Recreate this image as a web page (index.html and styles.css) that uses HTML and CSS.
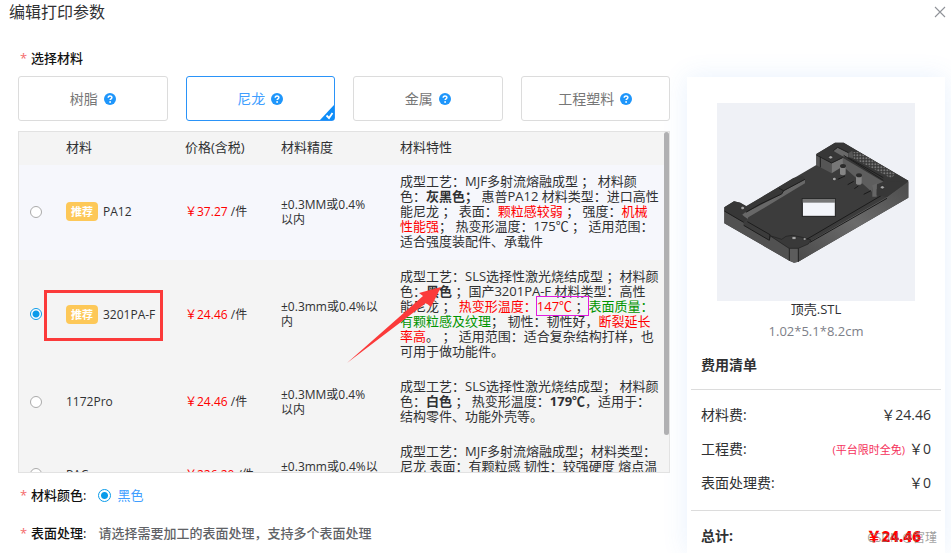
FILE: index.html
```html
<!DOCTYPE html>
<html lang="zh-CN">
<head>
    <meta charset="UTF-8">
    <meta name="viewport" content="width=device-width, initial-scale=1.0">
    <title>编辑打印参数</title>
    <link rel="stylesheet" href="styles.css">
</head>
<body>

<svg class="defs" aria-hidden="true">
    <symbol id="help" viewBox="0 0 12 12">
        <circle cx="6" cy="6" r="6" fill="#1e96fb"/>
        <path d="M4.2 4.7C4.2 2.4 7.9 2.4 7.9 4.6C7.9 5.8 6.1 5.8 6.1 7.1" fill="none" stroke="#fff" stroke-width="1.5"/>
        <circle cx="6.1" cy="9" r="0.9" fill="#fff"/>
    </symbol>
</svg>

<header class="dialog-header">
    <h1>编辑打印参数</h1>
    <button type="button" class="close" aria-label="关闭">
        <svg width="12" height="12" viewBox="0 0 12 12"><path d="M1 1L11 11M11 1L1 11" stroke="#909399" stroke-width="1.1"/></svg>
    </button>
</header>

<div class="dialog-body">
    <form class="params">
        <h2 class="field-title"><span class="star">*</span>选择材料</h2>

        <div class="tabs">
            <button type="button" class="tab">树脂<svg class="help"><use href="#help"/></svg></button>
            <button type="button" class="tab active">尼龙<svg class="help"><use href="#help"/></svg>
                <svg class="corner" viewBox="0 0 14 15"><path d="M14 0V15H0Z" fill="#0d8df8"/><path d="M6.5 10.5L9 13L12.5 8" fill="none" stroke="#fff" stroke-width="1.8"/></svg>
            </button>
            <button type="button" class="tab">金属<svg class="help"><use href="#help"/></svg></button>
            <button type="button" class="tab">工程塑料<svg class="help"><use href="#help"/></svg></button>
        </div>

        <div class="table-wrap">
            <table>
                <thead>
                    <tr>
                        <th class="col-radio"></th>
                        <th class="col-name">材料</th>
                        <th class="col-price">价格(含税)</th>
                        <th class="col-accuracy">材料精度</th>
                        <th>材料特性</th>
                    </tr>
                </thead>
                <tbody>
                    <tr class="hover">
                        <td><input type="radio" name="material" id="m1"></td>
                        <td><label for="m1"><span class="tag">推荐</span>PA12</label></td>
                        <td><span class="price">￥37.27</span> /件</td>
                        <td>±0.3MM或0.4%<br>以内</td>
                        <td class="desc">成型工艺：MJF多射流熔融成型 ； 材料颜<br>色：<b>灰黑色；</b> 惠普PA12 材料类型：进口高性<br>能尼龙 ； 表面：<span class="red">颗粒感较弱</span> ； 强度：<span class="red">机械<br>性能强</span>； 热变形温度：175℃ ； 适用范围：<br>适合强度装配件、承载件</td>
                    </tr>
                    <tr>
                        <td><input type="radio" name="material" id="m2" checked></td>
                        <td class="marked"><label for="m2"><span class="tag">推荐</span>3201PA-F</label></td>
                        <td><span class="price">￥24.46</span> /件</td>
                        <td>±0.3mm或0.4%以<br>内</td>
                        <td class="desc pointed">成型工艺：SLS选择性激光烧结成型 ；材料颜<br>色：<b>黑色</b> ；国产3201PA-F 材料类型：高性<br>能尼龙 ； <span class="red">热变形温度：</span><span class="boxed"><span class="red">147℃</span> ；</span><span class="green">表面质量：<br>有颗粒感及纹理</span>； 韧性：韧性好，<span class="red">断裂延长<br>率高</span>。 ； 适用范围：适合复杂结构打样，也<br>可用于做功能件。
                            <svg class="arrow" viewBox="0 0 98 82"><path d="M1 80L77 13L73 10L95 4L85 24L80 20Z" fill="#fb3a3a"/></svg>
                        </td>
                    </tr>
                    <tr>
                        <td><input type="radio" name="material" id="m3"></td>
                        <td><label for="m3">1172Pro</label></td>
                        <td><span class="price">￥24.46</span> /件</td>
                        <td>±0.3MM或0.4%<br>以内</td>
                        <td class="desc">成型工艺：SLS选择性激光烧结成型； 材料颜<br>色：<b>白色</b> ； 热变形温度：<b>179℃</b>，适用于：<br>结构零件、功能外壳等。</td>
                    </tr>
                    <tr>
                        <td><input type="radio" name="material" id="m4"></td>
                        <td><label for="m4">PAC</label></td>
                        <td><span class="price">￥226.20</span> /件</td>
                        <td>±0.3mm或0.4%以<br>内</td>
                        <td class="desc">成型工艺：MJF多射流熔融成型；材料类型：<br>尼龙 表面：有颗粒感 韧性：较强硬度 熔点温<br><br><br></td>
                    </tr>
                </tbody>
            </table>
            <div class="scroll-thumb"></div>
        </div>

        <div class="field color-field">
            <span class="field-title"><span class="star">*</span>材料颜色:</span>
            <input type="radio" name="color" id="black" checked>
            <label for="black" class="color-name">黑色</label>
        </div>
        <div class="field">
            <span class="field-title"><span class="star">*</span>表面处理:</span>
            <span class="hint">请选择需要加工的表面处理，支持多个表面处理</span>
        </div>
    </form>

    <aside class="summary">
        <svg class="model" viewBox="0 0 594 594" role="img" aria-label="顶壳">
            <defs>
                <linearGradient id="side" x1="0" y1="1" x2="1" y2="0">
                    <stop offset="0" stop-color="#4a4a4a"/>
                    <stop offset="0.5" stop-color="#6b6b6b"/>
                    <stop offset="1" stop-color="#4c4c4c"/>
                </linearGradient>
                <pattern id="mesh" width="9" height="9" patternUnits="userSpaceOnUse">
                    <rect width="9" height="9" fill="#3c3c3c"/>
                    <circle cx="4" cy="4" r="3" fill="#777"/>
                </pattern>
            </defs>
            <rect width="594" height="594" fill="#eff1f6"/>
            <g transform="translate(-6 81)">
                <!-- floor -->
                <path d="M28 232L57 214L76 218L94 228L304 105V72L360 38H386L580 152V203L250 395L237 398L223 392L28 280Z" fill="#3c3c3c"/>
                <!-- outer walls -->
                <path d="M28 243L86 277V286L163 331L168 320L223 355V392L28 280Z" fill="#515151"/>
                <path d="M223 355H250V395L237 398L223 392Z" fill="#5c5c5c"/>
                <path d="M250 355L516 201L580 155V203L250 395Z" fill="url(#side)"/>
                <path d="M223 355V392M250 355V395" stroke="#222" stroke-width="3"/>
                <!-- left rail -->
                <path d="M82 254L92 246L270 148V160L100 262L97 268Z" fill="#686868"/>
                <path d="M90 232L235 144L262 138L270 147L205 183L200 192L92 248Z" fill="#373737"/>
                <path d="M94 246L136 222L200 192L206 182L270 148M192 175L206 182" fill="none" stroke="#1d1d1d" stroke-width="3"/>
                <path d="M28 232L57 214L76 218L94 230L98 238L78 254L97 266L86 277L28 243Z" fill="#373737"/>
                <path d="M28 243L86 277M97 275L165 314L163 331L86 286" fill="none" stroke="#1d1d1d" stroke-width="3"/>
                <!-- front corner -->
                <path d="M165 317L200 328L213 319L232 316L262 322L288 330L280 342L250 355H222Z" fill="#393939" stroke="#202020" stroke-width="2"/>
                <path d="M275 328L500 196M285 337L516 205" fill="none" stroke="#1b1b1b" stroke-width="3"/>
                <!-- back wall -->
                <path d="M304 72L350 99V130L304 106Z" fill="#555"/>
                <path d="M350 99L384 82V109L350 130Z" fill="#777"/>
                <path d="M304 72L360 38H386L580 152L516 200L485 192L474 165L505 155L383 83L350 99Z" fill="#373737"/>
                <path d="M383 83L505 155L474 168L470 185L384 109Z" fill="#5e5e5e"/>
                <path d="M355 62L368 52L400 68V84L380 77L362 67Z" fill="#686868"/>
                <path d="M400 70L412 62L415 85L402 82Z" fill="#555"/>
                <path d="M415 66L432 66L542 132L528 145L415 85Z" fill="url(#mesh)"/>
                <path d="M355 62L368 52L400 68M386 76L505 151M400 83L505 143M304 75L350 99L383 83M316 80V112" fill="none" stroke="#1f1f1f" stroke-width="3"/>
                <!-- right corner -->
                <path d="M472 166L486 160L485 200L472 200Z" fill="#666"/>
                <path d="M485 178L515 156L580 152L516 201L485 195Z" fill="#373737"/>
                <!-- standoffs -->
                <path d="M375 108H392V133Q384 139 375 133Z M423 137H440V161Q432 168 423 161Z" fill="#858585"/>
                <ellipse cx="384" cy="108" rx="9" ry="6" fill="#2c2c2c"/>
                <ellipse cx="432" cy="136" rx="9" ry="6" fill="#2c2c2c"/>
                <path d="M368 148L390 138M398 164L416 154M418 176L430 168M446 193L468 182" stroke="#191919" stroke-width="3"/>
                <!-- screw holes -->
                <g fill="#a6a6a6" stroke="#222" stroke-width="2">
                    <ellipse cx="347" cy="82" rx="6" ry="5"/>
                    <ellipse cx="502" cy="172" rx="6" ry="5"/>
                    <ellipse cx="358" cy="147" rx="6" ry="5"/>
                    <ellipse cx="83" cy="234" rx="6" ry="5"/>
                    <ellipse cx="237" cy="324" rx="7" ry="5"/>
                    <ellipse cx="269" cy="327" rx="5" ry="4"/>
                </g>
                <rect x="262" y="206" width="99" height="53" fill="#f3f5fa" stroke="#1c1c1c" stroke-width="3"/>
                <rect x="263" y="207" width="97" height="11" fill="#777"/>
            </g>
        </svg>
        <p class="file-name">顶壳.STL</p>
        <p class="file-size">1.02*5.1*8.2cm</p>
        <h2 class="summary-title">费用清单</h2>
        <dl class="costs">
            <div><dt>材料费:</dt><dd>￥24.46</dd></div>
            <div><dt>工程费:</dt><dd><small>(平台限时全免)</small>￥0</dd></div>
            <div><dt>表面处理费:</dt><dd>￥0</dd></div>
        </dl>
        <div class="total"><span>总计:</span><strong>￥24.46</strong></div>
    </aside>
</div>

<div class="watermark">CSDN @宫瑾</div>

</body>
</html>
```
FILE: styles.css
```css
*,
*::after {
    box-sizing: border-box;
}
body {
    display: flex;
    flex-direction: column;
    margin: 0;
    height: 100vh;
    overflow: hidden;
    position: relative;
    background: #fff;
    color: #303133;
    font-family: "Open Sans", "Noto Sans CJK SC", sans-serif;
    font-size: 13px;
    line-height: 15px;
}
h1, h2, p, dl, dd {
    margin: 0;
}
.defs {
    position: absolute;
    width: 0;
    height: 0;
}
button {
    font: inherit;
    background: #fff;
    cursor: pointer;
}

/* header */
.dialog-header {
    display: flex;
    justify-content: space-between;
    padding: 0 5px 0 9px;
    height: 24px;
}
h1 {
    font-size: 16px;
    line-height: 24px;
    font-weight: 400;
}
.close {
    border: 0;
    padding: 0;
    line-height: 0;
}
.dialog-body {
    display: flex;
    flex: 1;
    min-height: 0;
    gap: 17px;
    padding: 0 6px 0 18px;
}
.params {
    flex: 1;
    min-width: 0;
    padding-top: 26px;
}
.field-title {
    font-size: 13px;
    line-height: 16px;
    font-weight: 500;
    color: #111;
}
.star {
    display: inline-block;
    width: 13px;
    padding-left: 2px;
    color: #f56c6c;
    font-weight: 400;
}

/* material tabs */
.tabs {
    display: flex;
    gap: 18px;
    margin: 10px 0;
}
.tab {
    flex: 1;
    position: relative;
    display: flex;
    align-items: center;
    justify-content: center;
    gap: 6px;
    height: 45px;
    padding: 0;
    border: 1px solid #dcdcdc;
    border-radius: 3px;
    color: #777;
    font-size: 14px;
}
.tab.active {
    border-color: #2a93f8;
    color: #409eff;
}
.help {
    width: 12px;
    height: 12px;
}
.corner {
    position: absolute;
    right: 0;
    bottom: 0;
    width: 14px;
    height: 15px;
}

/* material table */
.table-wrap {
    position: relative;
    height: 342px;
    overflow: hidden;
    border: 1px solid #e2e2e2;
    background: #f4f4f4;
}
table {
    width: 100%;
    table-layout: fixed;
    border-collapse: collapse;
}
th {
    height: 33px;
    padding: 0 0 2px;
    text-align: left;
    font-weight: 400;
}
.col-radio {
    width: 47px;
}
.col-name {
    width: 119px;
}
.col-price {
    width: 96px;
}
.col-accuracy {
    width: 119px;
}
td {
    padding: 9px 0 11px;
    font-size: 12px;
    white-space: nowrap;
}
.desc {
    font-size: 13px;
}
input[type="radio"] {
    appearance: none;
    display: block;
    width: 12px;
    height: 12px;
    margin: 0 0 0 11px;
    border: 1px solid #aaa;
    border-radius: 50%;
    background: #fff;
}
input[type="radio"]:checked {
    border-color: #0a9bea;
    background: radial-gradient(circle, #0a9bea 3px, #fff 4px);
}
.hover {
    background: #f6f7fc;
}
.tag {
    display: inline-block;
    margin-right: 5px;
    padding: 0 5px;
    border-radius: 4px;
    background: #fdc858;
    color: #fff;
    font-size: 11px;
    line-height: 19px;
    font-weight: 700;
}
.price,
.red {
    color: #f00;
}
.green {
    color: #009400;
}
.marked,
.pointed {
    position: relative;
}
.marked::after {
    content: "";
    position: absolute;
    left: -22px;
    top: 30px;
    width: 119px;
    height: 51px;
    border: 3px solid #fb3a3a;
}
.boxed {
    position: relative;
    outline: 1px solid #e01ae0;
}
.arrow {
    position: absolute;
    left: -54px;
    top: 23px;
    width: 98px;
    height: 82px;
}
.scroll-thumb {
    position: absolute;
    top: 0;
    right: 0;
    width: 5px;
    height: 303px;
    border-radius: 3px;
    background: #b0b0b2;
}

/* form rows */
.field {
    display: flex;
    align-items: center;
    gap: 12px;
    margin-top: 22px;
}
.color-field {
    margin-top: 14px;
}
.color-field input[type="radio"] {
    width: 13px;
    height: 13px;
    margin: 0;
}
.color-name {
    margin-left: -6px;
    color: #409eff;
}
.hint {
    color: #606266;
    font-weight: 500;
}

/* price summary */
.summary {
    flex: 0 0 258px;
    margin-top: 53px;
    padding: 26px 4px 0;
    background: #fff;
    box-shadow: 0 0 24px rgba(64, 140, 240, 0.12);
    font-size: 14px;
    line-height: 18px;
    text-align: center;
}
.model {
    display: block;
    width: 198px;
    height: 198px;
    margin: 0 auto;
}
.file-name,
.file-size {
    font-size: 13px;
    line-height: 17px;
}
.file-size {
    margin-top: 5px;
    color: #7d8088;
}
.summary-title {
    padding: 16px 10px 15px;
    font-size: 14px;
    font-weight: 700;
    text-align: left;
    border-bottom: 1px solid #dcdcdc;
}
.costs {
    padding: 16px 10px 18px;
    border-bottom: 1px solid #dcdcdc;
}
.costs div,
.total {
    display: flex;
    justify-content: space-between;
    height: 18px;
}
.costs div + div {
    margin-top: 16px;
}
.costs small {
    margin-right: 4px;
    color: #f5325c;
    font-size: 11px;
}
.total {
    margin: 16px 20px 0 10px;
    font-weight: 700;
}
.total strong {
    color: #f00;
    font-size: 15px;
}
.watermark {
    position: absolute;
    right: 14px;
    bottom: 8px;
    color: rgba(120, 120, 120, 0.7);
    font-size: 12px;
    line-height: 14px;
}
```
